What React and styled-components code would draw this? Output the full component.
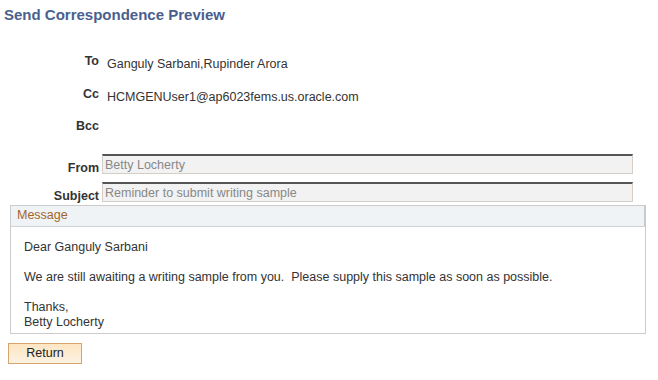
import React from 'react'
import styled, { createGlobalStyle } from 'styled-components'

const GlobalStyle = createGlobalStyle`
  body {
    margin: 0;
    background: #ffffff;
    font-family: "Liberation Sans", Arial, sans-serif;
    font-size: 12.5px;
    color: #333333;
  }
`;

const recipients = [
  { label: 'To', value: 'Ganguly Sarbani,Rupinder Arora' },
  { label: 'Cc', value: 'HCMGENUser1@ap6023fems.us.oracle.com' },
  { label: 'Bcc', value: '' },
];

const inputs = [
  { label: 'From', value: 'Betty Locherty' },
  { label: 'Subject', value: 'Reminder to submit writing sample' },
];

export default function App() {
  return (
    <>
      <GlobalStyle />
      <Page>
        <Title>Send Correspondence Preview</Title>
        <Recipients>
          {recipients.map((r) => (
            <RecipientRow key={r.label}>
              <Label>{r.label}</Label>
              <Value>{r.value}</Value>
            </RecipientRow>
          ))}
        </Recipients>
        <Inputs>
          {inputs.map((f) => (
            <InputRow key={f.label}>
              <InputLabel>{f.label}</InputLabel>
              <Field>{f.value}</Field>
            </InputRow>
          ))}
        </Inputs>
        <MessageBox>
          <MessageHeader>Message</MessageHeader>
          <MessageBody>
            <p>Dear Ganguly Sarbani</p>
            <p>We are still awaiting a writing sample from you.&nbsp; Please supply this sample as soon as possible.</p>
            <p>Thanks,<br />Betty Locherty</p>
          </MessageBody>
        </MessageBox>
        <Button type="button">Return</Button>
      </Page>
    </>
  )
}

const Page = styled.div`
  display: flex;
  flex-direction: column;
  padding: 6px 12px 0 8px;
`;

const Title = styled.h1`
  margin: 0 0 0 -4px;
  font-size: 15px;
  line-height: 18px;
  font-weight: bold;
  color: #4a5f8f;
`;

const Recipients = styled.div`
  display: flex;
  flex-direction: column;
  margin-top: 33px;
`;

const RecipientRow = styled.div`
  display: grid;
  grid-template-columns: 91px 1fr;
  column-gap: 8px;
  height: 32.5px;
  align-items: start;
`;

const Label = styled.div`
  text-align: right;
  font-weight: bold;
  color: #333333;
  line-height: 15px;
  margin-top: -3px;
`;

const Value = styled.div`
  line-height: 15px;
  color: #333333;
`;

const Inputs = styled.div`
  display: flex;
  flex-direction: column;
  gap: 8px;
  margin-top: -1px;
`;

const InputRow = styled.div`
  display: grid;
  grid-template-columns: 91px 531px;
  column-gap: 3px;
  align-items: end;
`;

const InputLabel = styled.div`
  text-align: right;
  font-weight: bold;
  line-height: 14px;
  margin-bottom: -1px;
  color: #333333;
`;

const Field = styled.div`
  box-sizing: border-box;
  height: 20px;
  padding: 2px 2px 0;
  background: #f2f2f2;
  border: 1px solid #d4cec6;
  border-top: 2px solid #555555;
  color: #888888;
  line-height: 15px;
  white-space: nowrap;
`;

const MessageBox = styled.div`
  margin: 3px 0 0 2px;
  border: 1px solid #cccccc;
  width: 636px;
  box-sizing: border-box;
`;

const MessageHeader = styled.div`
  height: 20px;
  line-height: 19px;
  padding-left: 6px;
  background: #eff3f5;
  border-bottom: 1px solid #cfd3d7;
  border-right: 2px solid #c6cbd0;
  margin-right: -1px;
  color: #a4652c;
`;

const MessageBody = styled.div`
  padding: 13px 13px 3px;
  color: #333333;
  line-height: 15px;

  p {
    margin: 0 0 15px;
  }

  p:last-child {
    margin-bottom: 0;
  }
`;

const Button = styled.button`
  align-self: flex-start;
  margin-top: 9px;
  width: 74px;
  height: 21px;
  padding: 0;
  font-family: "Liberation Sans", Arial, sans-serif;
  font-size: 12.5px;
  color: #222222;
  background: linear-gradient(#fde6c2, #fdf2e2);
  border: 1px solid #d6a56c;
  border-radius: 0;
  cursor: pointer;
`;
